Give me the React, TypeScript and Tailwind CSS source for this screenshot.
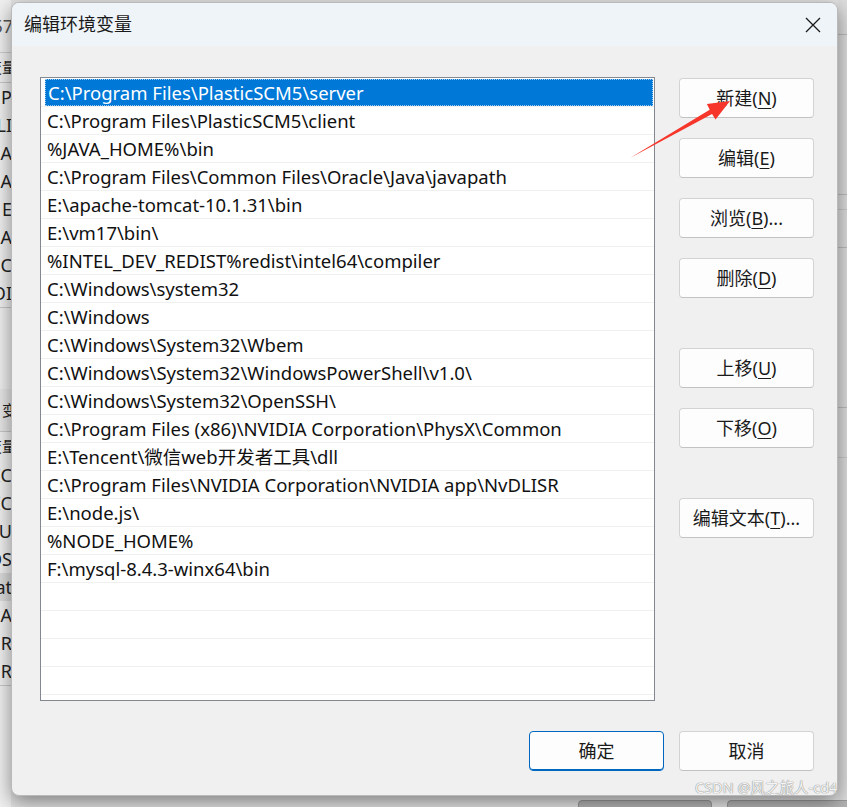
import React from "react";

const rows = [
  "C:\\Program Files\\PlasticSCM5\\server",
  "C:\\Program Files\\PlasticSCM5\\client",
  "%JAVA_HOME%\\bin",
  "C:\\Program Files\\Common Files\\Oracle\\Java\\javapath",
  "E:\\apache-tomcat-10.1.31\\bin",
  "E:\\vm17\\bin\\",
  "%INTEL_DEV_REDIST%redist\\intel64\\compiler",
  "C:\\Windows\\system32",
  "C:\\Windows",
  "C:\\Windows\\System32\\Wbem",
  "C:\\Windows\\System32\\WindowsPowerShell\\v1.0\\",
  "C:\\Windows\\System32\\OpenSSH\\",
  "C:\\Program Files (x86)\\NVIDIA Corporation\\PhysX\\Common",
  "E:\\Tencent\\微信web开发者工具\\dll",
  "C:\\Program Files\\NVIDIA Corporation\\NVIDIA app\\NvDLISR",
  "E:\\node.js\\",
  "%NODE_HOME%",
  "F:\\mysql-8.4.3-winx64\\bin",
  "",
  "",
  "",
  "",
];

function Btn({
  pre,
  mn,
  post = "",
  isDefault = false,
}: {
  pre: string;
  mn?: string;
  post?: string;
  isDefault?: boolean;
}) {
  return (
    <div
      className={
        "flex h-[40px] w-[135px] items-center justify-center rounded-[4px] border bg-[#fdfdfd] text-[18px] text-[#1a1a1a] " +
        (isDefault
          ? "border-[#0067c0] shadow-[inset_0_-1px_0_#0067c0]"
          : "border-[#d3d3d3] border-b-[#c2c2c2]")
      }
    >
      <span className="whitespace-nowrap">
        {pre}
        {mn !== undefined && (
          <>
            (<span className="underline underline-offset-[3px]">{mn}</span>)
          </>
        )}
        {post}
      </span>
    </div>
  );
}

const bgTop = ["P", "LI", "A", "A", "E", "A", "C", "OI"];
const bgBottom = ["IC", "IC", "IU", "OS", "at", "A", "R", "R"];

export default function App() {
  return (
    <div className="relative h-[807px] w-[847px] overflow-hidden bg-[#e4e4e4] font-['Noto_Sans','Noto_Sans_CJK_SC',sans-serif]">
      {/* background window (left strip) */}
      <div className="absolute left-0 top-0 flex h-full w-[11px] flex-col overflow-hidden bg-[#f0f0f0] text-[18px] leading-none whitespace-nowrap text-[#222]">
        <div className="flex h-[53px] items-center justify-end border-b border-[#cfcfcf]">
          <span className="-mr-[2px] text-[#555]">57</span>
        </div>
        <div className="flex h-[30px] items-center justify-end border-b border-[#c8c8c8] text-[15px]">
          <span className="-mr-[6px]">变量</span>
        </div>
        {bgTop.map((t, i) => (
          <div key={i} className="flex h-[28px] items-center justify-end">
            <span className="-mr-[1px]">{t}</span>
          </div>
        ))}
        <div className="h-[82px] border-t border-[#c8c8c8]" />
        <div className="flex h-[42px] items-center justify-end bg-[#e8e8e8] text-[15px]">
          <span className="-mr-[6px]">变</span>
        </div>
        <div className="flex h-[30px] items-center justify-end border-t border-[#c8c8c8] text-[15px]">
          <span className="-mr-[6px]">变量</span>
        </div>
        {bgBottom.map((t, i) => (
          <div
            key={i}
            className={
              "flex h-[28px] items-center justify-end " +
              (i === 4 ? "bg-[#dcdcdc]" : "")
            }
          >
            <span className="-mr-[1px]">{t}</span>
          </div>
        ))}
        <div className="flex-1 border-t border-[#c8c8c8]" />
      </div>

      {/* background right strip lines */}
      <div className="absolute right-0 top-0 flex h-full w-[9px] flex-col bg-[#dedede]">
        <div className="h-[34px]" />
        <div className="h-[160px] border-t border-[#bdbdbd]" />
        <div className="h-[15px] border-t border-[#bdbdbd]" />
        <div className="h-[38px] border-t border-[#c9c9c9]" />
        <div className="h-[160px] border-t border-[#bdbdbd]" />
        <div className="h-[50px] border-t border-[#bdbdbd]" />
        <div className="flex-1 border-t border-[#c9c9c9]" />
      </div>

      {/* bottom strip buttons of bg window */}
      <div className="absolute left-[578px] top-[800px] h-[20px] w-[134px] rounded-[4px] border border-[#9a9a9a] bg-[#b4b4b4]" />
      <div className="absolute left-[727px] top-[800px] h-[20px] w-[134px] rounded-[4px] border border-[#9a9a9a] bg-[#b4b4b4]" />

      {/* dialog */}
      <div className="absolute left-[11px] top-[2px] flex h-[794px] w-[827px] flex-col overflow-hidden rounded-[8px] border border-[#b9b9b9] bg-[#f0f0f0] shadow-[0_6px_20px_rgba(0,0,0,0.45)]">
        <div className="flex h-[43px] shrink-0 items-center justify-between bg-[#eff4f9] pl-[12px] pr-[16px]">
          <span className="text-[18px] text-[#1a1a1a]">编辑环境变量</span>
          <svg width="16" height="16" viewBox="0 0 16 16" className="mt-[1px]">
            <path d="M1 1L15 15M15 1L1 15" stroke="#1a1a1a" strokeWidth="1.3" />
          </svg>
        </div>

        <div className="flex flex-1 flex-col pl-[28px] pr-[23px] pt-[31px]">
          <div className="flex gap-[24px]">
            <div className="flex h-[624px] w-[616px] flex-col overflow-hidden border border-[#828790] bg-white pt-[1px]">
              {rows.map((r, i) => (
                <div
                  key={i}
                  className="flex h-[28px] shrink-0 border-b border-[#f0f0f0] pr-[1px]"
                >
                  <div
                    className={
                      "ml-[4px] flex flex-1 items-center pl-[2px] text-[18.5px] whitespace-nowrap " +
                      (i === 0
                        ? "border border-dotted border-[#9cc7ee] bg-[#0078d7] text-white"
                        : "text-[#111]")
                    }
                  >
                    {r}
                  </div>
                </div>
              ))}
            </div>

            <div className="flex flex-col pt-[1px]">
              <div className="flex flex-col gap-[20px]">
                <Btn pre="新建" mn="N" />
                <Btn pre="编辑" mn="E" />
                <Btn pre="浏览" mn="B" post="..." />
                <Btn pre="删除" mn="D" />
              </div>
              <div className="mt-[50px] flex flex-col gap-[20px]">
                <Btn pre="上移" mn="U" />
                <Btn pre="下移" mn="O" />
              </div>
              <div className="mt-[50px]">
                <Btn pre="编辑文本" mn="T" post="..." />
              </div>
            </div>
          </div>

          <div className="mt-[30px] flex justify-end gap-[15px]">
            <Btn pre="确定" isDefault />
            <Btn pre="取消" />
          </div>
        </div>
      </div>

      {/* watermark */}
      <div className="absolute left-[695px] top-[780px] text-[14.5px] leading-none whitespace-nowrap text-[#f4f4f4] [text-shadow:0_0_1px_#8a8a8a,0_0_1px_#8a8a8a]">
        CSDN @风之旅人-cd4
      </div>

      {/* red arrow annotation */}
      <svg
        className="pointer-events-none absolute left-0 top-0"
        width="847"
        height="807"
        viewBox="0 0 847 807"
      >
        <polygon
          points="630,158 709.7,109.7 706.9,104 730,101 715.5,119.5 712.1,114.1"
          fill="#f7362b"
        />
      </svg>
    </div>
  );
}
